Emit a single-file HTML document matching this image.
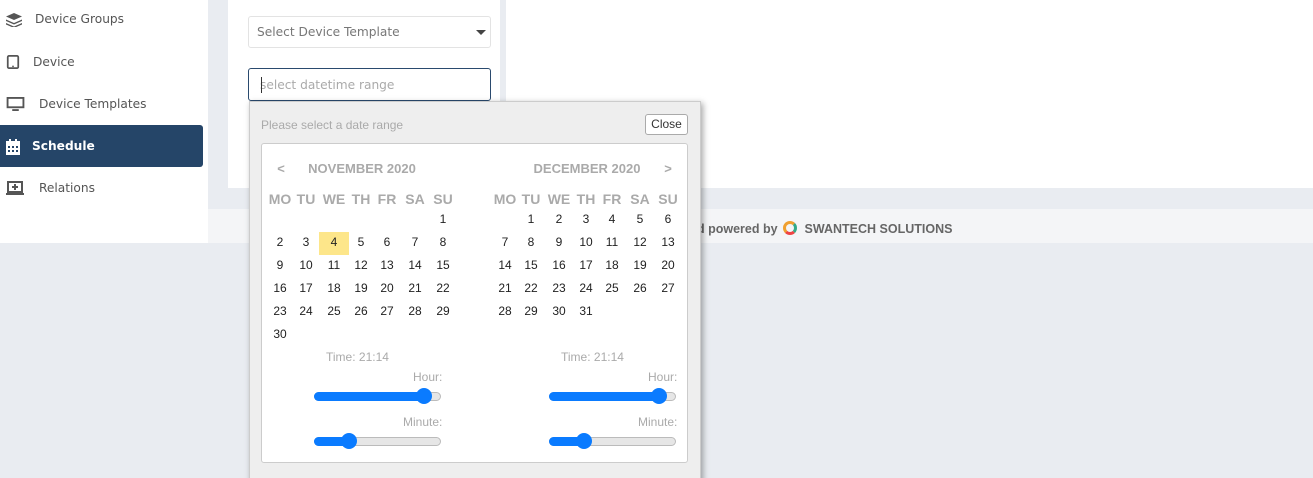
<!DOCTYPE html>
<html style="width:1313px;height:478px;overflow:hidden"><head><meta charset="utf-8"><style>
*{box-sizing:border-box;margin:0;padding:0}
body{width:1313px;height:478px;background:#e9ecf1;font-family:"Liberation Sans",sans-serif;position:relative;overflow:hidden}
.a{position:absolute}
.side{left:0;top:0;width:208px;height:243px;background:#fff}
.nav{position:absolute;left:0;color:#555;font-family:"DejaVu Sans","Liberation Sans",sans-serif;font-size:12.2px}
.ic{position:absolute;left:6px;width:16px;height:14px}
.c{position:absolute;transform:translateX(-50%);font-size:12px;color:#222;white-space:nowrap}
.h{color:#aaa;font-weight:bold;font-size:14px}
.hm{color:#aaa;font-weight:bold;font-size:13px}
.sl{position:absolute;height:9px;border:1px solid #bbb;background:#e6e6e6;border-radius:5px}
.sl i{position:absolute;left:-1px;top:-1px;height:9px;background:#0a7bff;border-radius:5px}
.sl b{position:absolute;top:-5px;width:16px;height:16px;border-radius:50%;background:#0a7bff}
.lbl{position:absolute;font-size:12px;color:#aaa}
</style></head><body>
<div class="a side"></div>
<div class="a" style="left:208px;top:0;width:20px;height:188px;background:#e9ecf1"></div>
<div class="a" style="left:228px;top:0;width:272px;height:188px;background:#fff"></div>
<div class="a" style="left:500px;top:0;width:6px;height:188px;background:#e9ecf1"></div>
<div class="a" style="left:506px;top:0;width:807px;height:188px;background:#fff"></div>
<div class="a" style="left:208px;top:209px;width:1105px;height:34px;background:#f4f5f7"></div>
<div class="a" style="left:697px;top:221px;font-family:'Liberation Sans',sans-serif;font-size:12.5px;font-weight:bold;color:#666">d powered by <span style="display:inline-block;width:14px;height:14px;border-radius:50%;border:3px solid #f0a030;border-right-color:#3a8;border-bottom-color:#e44;vertical-align:-2px;margin:0 4px 0 2px"></span> SWANTECH SOLUTIONS</div>

<svg class="ic" style="top:13px" viewBox="0 0 16 14"><path d="M8 0L16 3.5 8 7 0 3.5Z M0 6.5L8 10 16 6.5 16 8 8 11.5 0 8Z M0 10L8 13.5 16 10 16 11.5 8 15 0 11.5Z" fill="#555"/></svg>
<div class="nav" style="left:35px;top:12px">Device Groups</div>
<svg class="ic" style="top:55px;width:14px;left:6px" viewBox="0 0 14 16"><rect x="1" y="1" width="12" height="14" rx="1.5" fill="none" stroke="#555" stroke-width="2"/><circle cx="7" cy="13" r="1" fill="#555"/></svg>
<div class="nav" style="left:33px;top:55px">Device</div>
<svg class="ic" style="top:97px;width:19px;left:6px" viewBox="0 0 19 15"><rect x="1" y="1" width="17" height="10" fill="none" stroke="#555" stroke-width="2"/><rect x="6" y="13" width="7" height="2" fill="#555"/></svg>
<div class="nav" style="left:39px;top:97px">Device Templates</div>
<div class="a" style="left:0;top:125px;width:203px;height:42px;background:#254568;border-radius:0 3px 3px 0"></div>
<svg class="ic" style="top:139px;width:14px;height:16px" viewBox="0 0 14 16"><rect x="0" y="2" width="14" height="14" fill="#fff"/><rect x="3" y="0" width="2" height="4" fill="#fff"/><rect x="9" y="0" width="2" height="4" fill="#fff"/><g fill="#254568"><rect x="2" y="7" width="2" height="2"/><rect x="6" y="7" width="2" height="2"/><rect x="10" y="7" width="2" height="2"/><rect x="2" y="11" width="2" height="2"/><rect x="6" y="11" width="2" height="2"/><rect x="10" y="11" width="2" height="2"/></g></svg>
<div class="nav" style="left:32px;top:139px;color:#fff;font-weight:bold">Schedule</div>
<svg class="ic" style="top:181px;width:18px" viewBox="0 0 18 14"><rect x="2" y="1" width="14" height="10" fill="none" stroke="#555" stroke-width="2"/><rect x="0" y="12" width="18" height="2" fill="#555"/><path d="M9 3v6M6 6h6" stroke="#555" stroke-width="2"/></svg>
<div class="nav" style="left:39px;top:181px">Relations</div>

<div class="a" style="left:248px;top:16px;width:243px;height:32px;border:1px solid #e3e3e3;border-radius:3px;font-family:'DejaVu Sans',sans-serif;font-size:12.2px;color:#777;padding:8px 8px">Select Device Template</div>
<div class="a" style="left:476px;top:30px;border:5px solid transparent;border-top:5px solid #444;border-bottom:0"></div>
<div class="a" style="left:248px;top:68px;width:243px;height:33px;border:1px solid #2a4a6e;border-radius:3px;font-family:'DejaVu Sans',sans-serif;font-size:12.2px;color:#aaa;padding:9px 11px"><span style="position:absolute;left:12px;top:8px;width:1px;height:16px;background:#333"></span>select datetime range</div>

<div class="a" style="left:249px;top:101px;width:452px;height:390px;background:#eee;border:1px solid #ccc;box-shadow:2px 2px 6px rgba(0,0,0,.35)"></div>
<div class="lbl" style="left:261px;top:118px">Please select a date range</div>
<div class="a" style="left:645px;top:114px;width:43px;height:21px;border:1px solid #aaa;border-radius:3px;background:#fff;font-size:12px;color:#333;text-align:center;line-height:19px">Close</div>
<div class="a" style="left:261px;top:143px;width:427px;height:320px;background:#fff;border:1px solid #ccc;border-radius:3px"></div>
<div class="a" style="left:319px;top:232px;width:30px;height:23px;background:#fde68a"></div>
<div id="cal"></div>
<div class="lbl" style="left:326px;top:350px">Time: 21:14</div>
<div class="lbl" style="left:561px;top:350px">Time: 21:14</div>
<div class="lbl" style="left:413px;top:370px">Hour:</div>
<div class="lbl" style="left:648px;top:370px">Hour:</div>
<div class="lbl" style="left:403px;top:415px">Minute:</div>
<div class="lbl" style="left:638px;top:415px">Minute:</div>
<div class="sl" style="left:314px;top:392px;width:127px"><i style="width:112px"></i><b style="left:101px"></b></div>
<div class="sl" style="left:549px;top:392px;width:127px"><i style="width:112px"></i><b style="left:101px"></b></div>
<div class="sl" style="left:314px;top:437px;width:127px"><i style="width:35px"></i><b style="left:26px"></b></div>
<div class="sl" style="left:549px;top:437px;width:127px"><i style="width:35px"></i><b style="left:26px"></b></div>
<script>
var h='';function t(x,y,s,cl){h+='<div class="c '+(cl||'')+'" style="left:'+x+'px;top:'+(y-7)+'px">'+s+'</div>';}
var L=[280,306,334,361,387,415,443],R=[505,531,559,586,612,640,668],d=['MO','TU','WE','TH','FR','SA','SU'];
t(281,168,'&lt;','hm');t(362,168,'NOVEMBER 2020','hm');t(587,168,'DECEMBER 2020','hm');t(668,168,'&gt;','hm');
for(var i=0;i<7;i++){t(L[i],198,d[i],'h');t(R[i],198,d[i],'h');}
var ry=[219,242,265,288,311,334];
function m(C,start,n){var c=start,r=0;for(var k=1;k<=n;k++){t(C[c],ry[r],k);c++;if(c>6){c=0;r++;}}}
m(L,6,30);m(R,1,31);
document.getElementById('cal').innerHTML=h;
</script>
</body></html>
